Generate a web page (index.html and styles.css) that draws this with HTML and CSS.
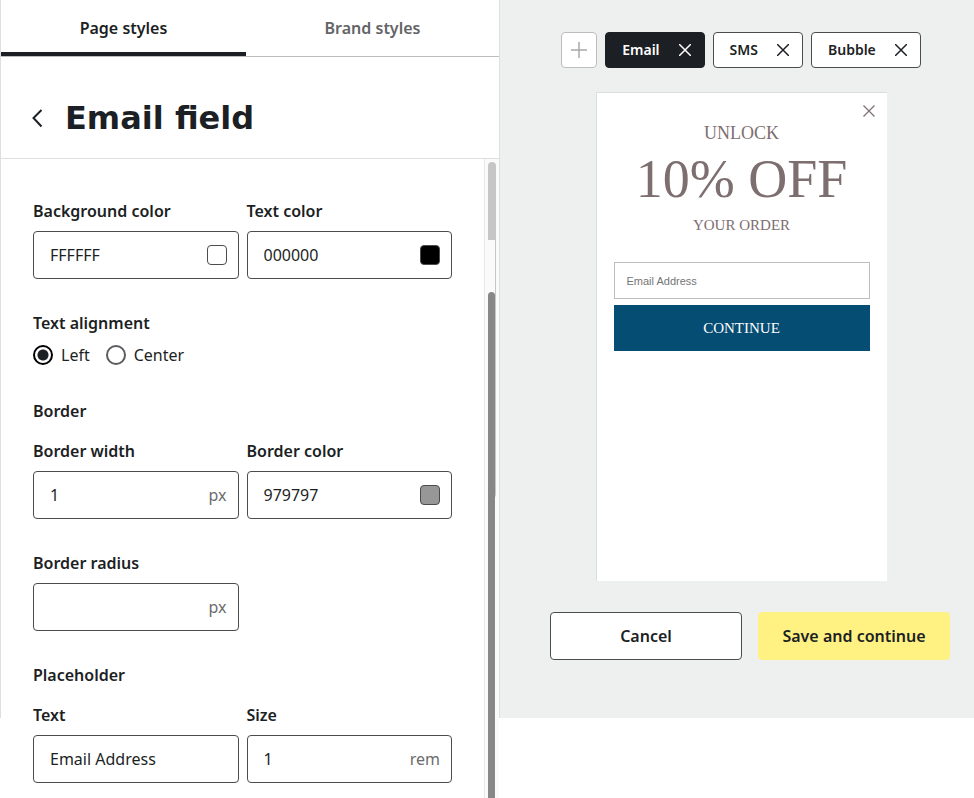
FILE: index.html
```html
<!DOCTYPE html>
<html lang="en">
<head>
<meta charset="utf-8">
<meta name="viewport" content="width=device-width, initial-scale=1">
<title>Email field</title>
<link rel="stylesheet" href="styles.css">
</head>
<body>
<div class="app">
  <section class="sidebar">
    <nav class="tabs">
      <button class="tab tab-active" type="button">Page styles</button>
      <button class="tab" type="button">Brand styles</button>
    </nav>
    <header class="heading">
      <button class="back" type="button" aria-label="Back">
        <svg width="12" height="20" viewBox="0 0 12 20"><path d="M10.500 1 2.500 9l8 8.500" fill="none" stroke="currentColor" stroke-width="2"/></svg>
      </button>
      <h1>Email field</h1>
    </header>
    <div class="panel">
      <form class="form">
        <div class="row">
          <div class="field">
            <label for="bg">Background color</label>
            <div class="box"><input id="bg" type="text" value="FFFFFF"><button class="swatch swatch-white" type="button" aria-label="Pick background color"></button></div>
          </div>
          <div class="field">
            <label for="fg">Text color</label>
            <div class="box"><input id="fg" type="text" value="000000"><button class="swatch swatch-black" type="button" aria-label="Pick text color"></button></div>
          </div>
        </div>
        <fieldset class="field">
          <legend>Text alignment</legend>
          <div class="radios">
            <label class="radio"><input type="radio" name="align" checked>Left</label>
            <label class="radio"><input type="radio" name="align">Center</label>
          </div>
        </fieldset>
        <section class="group">
          <h2>Border</h2>
          <div class="row">
            <div class="field">
              <label for="bw">Border width</label>
              <div class="box"><input id="bw" type="text" value="1"><span class="unit">px</span></div>
            </div>
            <div class="field">
              <label for="bc">Border color</label>
              <div class="box"><input id="bc" type="text" value="979797"><button class="swatch swatch-gray" type="button" aria-label="Pick border color"></button></div>
            </div>
          </div>
        </section>
        <div class="row">
          <div class="field">
            <label for="br">Border radius</label>
            <div class="box"><input id="br" type="text"><span class="unit">px</span></div>
          </div>
        </div>
        <section class="group">
          <h2>Placeholder</h2>
          <div class="row">
            <div class="field">
              <label for="pt">Text</label>
              <div class="box"><input id="pt" type="text" value="Email Address"></div>
            </div>
            <div class="field">
              <label for="ps">Size</label>
              <div class="box"><input id="ps" type="text" value="1"><span class="unit">rem</span></div>
            </div>
          </div>
        </section>
      </form>
      <div class="track">
        <div class="thumb"></div>
        <div class="gap"></div>
        <div class="thumb-dark"></div>
      </div>
    </div>
  </section>
  <main class="preview">
    <div class="chips">
      <button class="add" type="button" aria-label="Add">
        <svg width="16" height="16" viewBox="0 0 16 16"><path d="M8 0v16M0 8h16" stroke="currentColor" stroke-width="1.5"/></svg>
      </button>
      <button class="chip chip-active" type="button">Email
        <svg width="12" height="12" viewBox="0 0 12 12"><path d="m0 0 12 12M12 0 0 12" stroke="currentColor" stroke-width="1.5"/></svg>
      </button>
      <button class="chip" type="button">SMS
        <svg width="12" height="12" viewBox="0 0 12 12"><path d="m0 0 12 12M12 0 0 12" stroke="currentColor" stroke-width="1.5"/></svg>
      </button>
      <button class="chip" type="button">Bubble
        <svg width="12" height="12" viewBox="0 0 12 12"><path d="m0 0 12 12M12 0 0 12" stroke="currentColor" stroke-width="1.5"/></svg>
      </button>
    </div>
    <article class="card">
      <button class="close" type="button" aria-label="Close">
        <svg width="12" height="12" viewBox="0 0 12 12"><path d="m.5.5 11 11m0-11-11 11" stroke="currentColor" stroke-width="1.2"/></svg>
      </button>
      <p class="lead">UNLOCK</p>
      <p class="offer">10% OFF</p>
      <p class="order">YOUR ORDER</p>
      <input class="email" type="email" placeholder="Email Address" aria-label="Email Address">
      <button class="continue" type="button">CONTINUE</button>
    </article>
    <div class="actions">
      <button class="action" type="button">Cancel</button>
      <button class="action action-primary" type="button">Save and continue</button>
    </div>
  </main>
</div>
</body>
</html>
```
FILE: styles.css
```css
* { box-sizing: border-box; }

body {
  margin: 0;
  min-height: 100vh;
  background: #fff;
  color: #1c1f24;
  font: 16px/24px "Noto Sans", "Open Sans", sans-serif;
}

h1, h2, p { margin: 0; }
button, input { font: inherit; color: inherit; }
button { padding: 0; border: 0; background: none; cursor: pointer; }
svg { display: block; flex: none; }

.app {
  display: grid;
  grid-template-columns: 500fr 474fr;
  grid-template-rows: minmax(0, 1fr);
  height: 90vh;
}

/* Settings sidebar */
.sidebar {
  min-width: 0;
  border: solid #dedfe0;
  border-width: 0 1px;
}

.tabs {
  display: grid;
  grid-template-columns: 245fr 253fr;
  border-bottom: 1px solid #bdbdbd;
}

.tab {
  height: 56px;
  border-bottom: 4px solid transparent;
  padding-top: 3px;
  font-weight: 600;
  color: #636466;
}

.tab-active { border-color: #1c1f24; color: #1c1f24; }

.heading {
  display: flex;
  align-items: center;
  gap: 22px;
  padding: 40px 30px 18px;
  border-bottom: 1px solid #dedfe0;
}

h1 {
  font: bold 32px/43px "DejaVu Sans", sans-serif;
}

.panel {
  display: flex;
  height: calc(100vh - 159px);
}

.form {
  flex: 1;
  display: flex;
  flex-direction: column;
  gap: 32px;
  padding: 40px 32px 0;
}

.row {
  display: grid;
  grid-template-columns: 1fr 1fr;
  gap: 8px;
}

.field {
  display: flex;
  flex-direction: column;
  gap: 8px;
  min-width: 0;
  margin: 0;
  padding: 0;
  border: 0;
  font-weight: 600;
}

legend { padding: 0 0 8px; }

.group { display: flex; flex-direction: column; gap: 16px; }
h2 { font-size: 16px; line-height: 24px; font-weight: 600; }

.box {
  display: flex;
  align-items: center;
  height: 48px;
  padding: 0 11px 0 16px;
  border: 1px solid #4a4c50;
  border-radius: 4px;
  background: #fff;
  font-weight: 400;
}

.box input {
  flex: 1;
  min-width: 0;
  padding: 0;
  border: 0;
  outline: 0;
  background: none;
}

.unit { color: #6b6c6e; }

.swatch {
  width: 20px;
  height: 20px;
  border: 1px solid #4a4c50;
  border-radius: 4px;
}

.swatch-white { background: #fff; }
.swatch-black { background: #000; }
.swatch-gray { background: #979797; }

.radios { display: flex; gap: 16px; font-weight: 400; }
.radio { display: flex; align-items: center; gap: 8px; }

.radio input {
  appearance: none;
  width: 20px;
  height: 20px;
  margin: 0;
  border: 2px solid #5a5c5f;
  border-radius: 50%;
}

.radio input:checked {
  border-color: #000;
  background: radial-gradient(circle, #1c1f24 5px, #fff 6px);
}

.track {
  position: relative;
  width: 15px;
  border-left: 1px solid #e8e8e8;
  background: #fafafa;
}

.thumb, .gap, .thumb-dark { position: absolute; left: 3px; width: 7px; }
.thumb { top: 3px; width: 8px; height: 336px; border-radius: 4px; background: #c6c6c6; }
.gap { top: 81px; height: 56px; background: #fafafa; }
.thumb-dark { top: 133px; bottom: 0; border-radius: 4px 4px 0 0; background: #878787; }

/* Preview */
.preview {
  display: flex;
  flex-direction: column;
  align-items: center;
  padding: 32px 24px 0 32px;
  background: #eef0ef;
}

.chips { display: flex; gap: 8px; }

.add, .chip {
  display: flex;
  align-items: center;
  justify-content: center;
  height: 36px;
  border: 1px solid #4a4c50;
  border-radius: 4px;
  background: #fff;
}

.add { width: 36px; border-color: #bdbdbd; color: #a9a9a9; }

.chip {
  gap: 19px;
  padding: 0 13px 0 16px;
  font-size: 14px;
  font-weight: 600;
}

.chip-active { border-color: #1c1f24; background: #1c1f24; color: #fff; }

.card {
  position: relative;
  display: flex;
  flex-direction: column;
  width: 291px;
  height: 489px;
  margin-top: 24px;
  padding: 28px 17px;
  border: solid #dcdede;
  border-width: 1px 0 0 1px;
  background: #fff;
  color: #7d6e6f;
  font-family: Georgia, "Liberation Serif", serif;
  text-align: center;
}

.close { position: absolute; top: 12px; right: 12px; }
.lead { font-size: 18px; line-height: 24px; }
.offer { font-size: 54px; line-height: 68px; }
.order { font-size: 15px; line-height: 24px; }

.email {
  height: 37px;
  margin: 25px 0 6px;
  padding: 0 12px;
  border: 1px solid #bdbdbd;
  border-radius: 0;
  background: #fff;
  font: 11px "Liberation Sans", sans-serif;
}

.email::placeholder { color: #757575; }

.continue {
  height: 46px;
  background: #064d73;
  color: #fff;
  font-size: 15px;
}

.actions {
  align-self: stretch;
  display: flex;
  justify-content: flex-end;
  gap: 16px;
  margin-top: 31px;
}

.action {
  width: 192px;
  height: 48px;
  border: 1px solid #4a4c50;
  border-radius: 4px;
  background: #fff;
  font-weight: 600;
}

.action-primary { border-color: #fff283; background: #fff283; }
```
